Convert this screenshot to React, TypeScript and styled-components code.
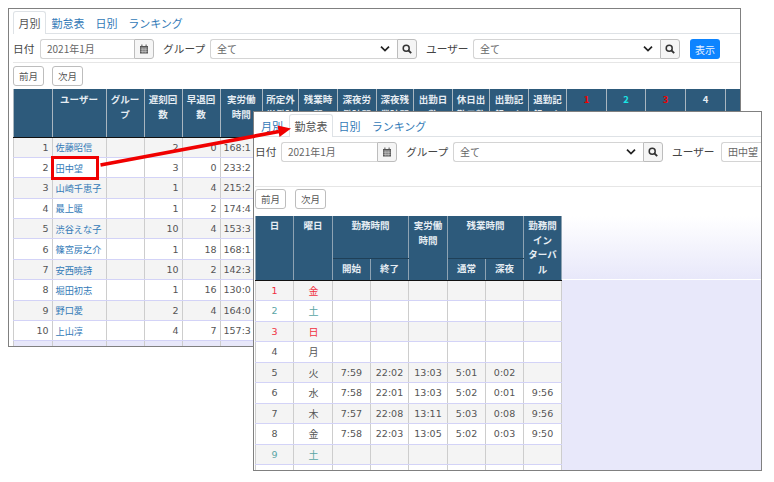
import React from "react";
import styled, { createGlobalStyle } from "styled-components";

const Global = createGlobalStyle`
  html, body { margin: 0; padding: 0; background: #fff; }
  body { font-family: "DejaVu Sans", "Noto Sans CJK JP", sans-serif; color: #333; }
`;

const Canvas = styled.div`
  position: relative;
  width: 774px;
  height: 482px;
  overflow: hidden;
  background: #fff;
`;

const Win = styled.section<{ $x: number; $y: number; $w: number; $h: number; $pad: number }>`
  position: absolute;
  left: ${(p) => p.$x}px;
  top: ${(p) => p.$y}px;
  width: ${(p) => p.$w}px;
  height: ${(p) => p.$h}px;
  box-sizing: border-box;
  border: 1px solid #808080;
  background: #fff;
  overflow: hidden;
  padding: 2px 0 0 ${(p) => p.$pad}px;
`;

const Tabs = styled.div`
  display: flex;
  height: 22px;
  box-shadow: 0 1px 0 #dee2e6;
  width: 900px;
  align-items: stretch;
`;

const Tab = styled.div<{ $active?: boolean; $w: number }>`
  width: ${(p) => p.$w}px;
  box-sizing: border-box;
  display: flex;
  align-items: center;
  justify-content: center;
  font: 11px "Noto Sans CJK JP", sans-serif;
  color: ${(p) => (p.$active ? "#555" : "#337ab7")};
  background: #fff;
  border: 1px solid ${(p) => (p.$active ? "#dee2e6" : "transparent")};
  border-bottom: 0;
  border-radius: 3px 3px 0 0;
  height: ${(p) => (p.$active ? "23px" : "22px")};
`;

const FormRow = styled.div`
  display: flex;
  align-items: center;
  height: 20px;
  margin-top: 6px;
  width: 900px;
`;

const Label = styled.span<{ $w: number; $gap: number }>`
  width: ${(p) => p.$w}px;
  margin-right: ${(p) => p.$gap}px;
  flex: none;
  font: 10.7px/20px "Noto Sans CJK JP", sans-serif;
  color: #444;
  white-space: nowrap;
`;

const Field = styled.div<{ $w: number }>`
  width: ${(p) => p.$w}px;
  height: 20px;
  flex: none;
  box-sizing: border-box;
  border: 1px solid #d4d4d4;
  border-radius: 3px 0 0 3px;
  border-right: 0;
  padding: 0 18px 0 6px;
  position: relative;
  font: 10px/18px "Noto Sans CJK JP", sans-serif;
  color: #666;
  background: #fff;
  display: flex;
  align-items: center;
`;

const Chevron = styled.svg`
  position: absolute;
  right: 7px;
  top: 5px;
  width: 10px;
  height: 8px;
`;

const AddOn = styled.div<{ $w: number; $after: number }>`
  width: ${(p) => p.$w}px;
  height: 20px;
  flex: none;
  box-sizing: border-box;
  border: 1px solid #bdbdbd;
  border-radius: 0 3px 3px 0;
  background: #f5f5f5;
  margin-right: ${(p) => p.$after}px;
  display: flex;
  align-items: center;
  justify-content: center;
  color: #444;
`;

const Primary = styled.button`
  width: 30px;
  height: 20px;
  flex: none;
  padding: 0;
  border: 0;
  border-radius: 3px;
  background: #0d84ff;
  color: #e8f2ff;
  font: 10px "Noto Sans CJK JP", sans-serif;
`;

const Rule = styled.div<{ $top: number }>`
  height: 1px;
  width: 900px;
  margin-top: ${(p) => p.$top}px;
  background: #e6e6e6;
`;

const NavRow = styled.div<{ $gap: number; $top: number }>`
  display: flex;
  gap: ${(p) => p.$gap}px;
  margin-top: ${(p) => p.$top}px;
`;

const NavBtn = styled.button`
  width: 31px;
  height: 20px;
  box-sizing: border-box;
  padding: 0;
  border: 1px solid #bdbdbd;
  border-radius: 3px;
  background: #fff;
  color: #555;
  font: 9.5px "Noto Sans CJK JP", sans-serif;
`;

const Grid = styled.table<{ $w: number }>`
  border-collapse: collapse;
  table-layout: fixed;
  width: ${(p) => p.$w}px;
  font: 9.5px "DejaVu Sans", "Noto Sans CJK JP", sans-serif;
`;

const TableArea = styled.div<{ $top: number; $w: number; $h: number }>`
  margin-top: ${(p) => p.$top}px;
  width: ${(p) => p.$w}px;
  height: ${(p) => p.$h}px;
  overflow: hidden;
`;

const LavenderArea = styled(TableArea)`
  background: linear-gradient(#fff 0, #e8e8fa 63px, #fff 63px, #fff 64px, #e8e8fa 64px, #e8e8fa 100%);
`;

const Head = styled.th<{ $h?: number; $tone?: string; $sub?: boolean }>`
  background: #2d5a7b;
  color: ${(p) => p.$tone ?? "#e6edf3"};
  font: bold 9.5px/14.6px "Noto Sans CJK JP", sans-serif;
  height: ${(p) => p.$h ?? 48}px;
  padding: 3px 3px 0;
  box-sizing: border-box;
  vertical-align: top;
  text-align: center;
  border-left: 1px solid #a9b6c0;
  border-right: 1px solid #a9b6c0;
  border-top: ${(p) => (p.$sub ? "1px solid #8ea3b3" : "0")};
  border-bottom: 1px solid #111;
`;

const DailyHead = styled(Head)`
  padding-top: 2px;
  border-left-color: #8ea3b3;
  border-right-color: #8ea3b3;
`;

const HeadGroup = styled(DailyHead)`
  border-bottom: 1px solid #1f4058;
`;

const Row = styled.tr<{ $odd: boolean; $h: number }>`
  height: ${(p) => p.$h}px;
  background: ${(p) => (p.$odd ? "#f4f4f4" : "#fff")};
`;

const Cell = styled.td<{ $align?: string; $tone?: string }>`
  box-sizing: border-box;
  padding: 0 3px;
  text-align: ${(p) => p.$align ?? "right"};
  color: ${(p) => p.$tone ?? "#555"};
  border-left: 1px solid #cdcdcd;
  border-right: 1px solid #cdcdcd;
  border-bottom: 1px solid #d3d3f7;
  white-space: nowrap;
  overflow: hidden;
`;

const DayName = styled(Cell)`
  padding: 0 3px 0 4px;
  font: 10px "Noto Sans CJK JP", sans-serif;
`;

const NameLink = styled.a`
  color: #337ab7;
  font: 9.2px "Noto Sans CJK JP", sans-serif;
  text-decoration: none;
`;

const Tail = styled.tr`
  height: 8px;
  background: #e8e8fa;
  td { border-left: 1px solid #cdcdcd; padding: 0; }
`;

const Callout = styled.div`
  position: absolute;
  left: 51px;
  top: 156px;
  width: 48px;
  height: 24px;
  box-sizing: border-box;
  border: 3px solid #f00000;
`;

const Arrow = styled.svg`
  position: absolute;
  left: 0;
  top: 0;
  width: 774px;
  height: 482px;
  pointer-events: none;
`;

const Calendar = () => (
  <svg width="10" height="10" viewBox="0 0 10 10">
    <path fill="#555" d="M1 2h8v7.5H1zM2.4.6h1v2h-1zM6.6.6h1v2h-1z" />
    <path stroke="#eee" strokeWidth=".5" d="M1.5 4h7M1.5 5.7h7M1.5 7.4h7M3.2 3.6v5.6M5 3.6v5.6M6.8 3.6v5.6" />
  </svg>
);

const Search = () => (
  <svg width="10" height="10" viewBox="0 0 10 10" fill="none" stroke="#333" strokeWidth="1.5">
    <circle cx="4.2" cy="4.2" r="3" />
    <path d="M6.5 6.5 9.2 9.2" strokeWidth="1.8" />
  </svg>
);

const Down = () => (
  <Chevron viewBox="0 0 10 8" fill="none" stroke="#222" strokeWidth="1.7">
    <path d="M1 1.6 5 5.6 9 1.6" />
  </Chevron>
);

const monthlyCols = [38.5, 54, 38, 38, 38, 42.5, 36, 39, 38.5, 37.5, 39, 37, 39, 38, 40, 39, 40, 40, 15];
const monthlyHead: [string, string?][] = [
  [""], ["ユーザー"], ["グループ"], ["遅刻回数"], ["早退回数"], ["実労働時間"], ["所定外労働時間"], ["残業時間"],
  ["深夜労働時間"], ["深夜残業時間"], ["出勤日数"], ["休日出勤日数"], ["出勤記録のない"], ["退勤記録のない"],
  ["1", "#f00000"], ["2", "#19e6e6"], ["3", "#f00000"], ["4"], [""],
];
const staff: [string, string, string, string][] = [
  ["佐藤昭信", "2", "0", "168:1"], ["田中望", "3", "0", "233:2"], ["山崎千恵子", "1", "4", "215:2"],
  ["最上暖", "1", "2", "174:4"], ["渋谷えな子", "10", "4", "153:3"], ["篠宮房之介", "1", "18", "168:1"],
  ["安西暁詩", "10", "2", "142:3"], ["堀田初志", "1", "16", "130:0"], ["野口愛", "2", "4", "164:0"], ["上山淳", "4", "7", "157:3"],
];

const dailyCols = [38, 39, 38, 38, 39, 38, 38, 38];
const days: string[][] = [
  ["1", "金"], ["2", "土"], ["3", "日"], ["4", "月"],
  ["5", "火", "7:59", "22:02", "13:03", "5:01", "0:02", ""],
  ["6", "水", "7:58", "22:01", "13:03", "5:02", "0:01", "9:56"],
  ["7", "木", "7:57", "22:08", "13:11", "5:03", "0:08", "9:56"],
  ["8", "金", "7:58", "22:03", "13:05", "5:02", "0:03", "9:50"],
  ["9", "土"], ["", ""],
];
const dayTone = (n: number) => (n === 1 || n === 3 ? "#f03040" : n === 2 || n === 9 ? "#5aa5a5" : "#555");

const Colgroup = ({ cols }: { cols: number[] }) => (
  <colgroup>
    {cols.map((w, i) => (
      <col key={i} style={{ width: w }} />
    ))}
  </colgroup>
);

export default function App() {
  return (
    <Canvas>
      <Global />
      <Win $x={8} $y={8} $w={733} $h={339} $pad={4}>
        <Tabs>
          <Tab $active $w={33}>月別</Tab>
          <Tab $w={44}>勤怠表</Tab>
          <Tab $w={33}>日別</Tab>
          <Tab $w={65}>ランキング</Tab>
        </Tabs>
        <FormRow>
          <Label $w={22} $gap={5}>日付</Label>
          <Field $w={94}>2021年1月</Field>
          <AddOn $w={20} $after={9}><Calendar /></AddOn>
          <Label $w={42} $gap={5}>グループ</Label>
          <Field $w={187}>全て<Down /></Field>
          <AddOn $w={20} $after={9}><Search /></AddOn>
          <Label $w={42} $gap={5}>ユーザー</Label>
          <Field $w={187}>全て<Down /></Field>
          <AddOn $w={20} $after={10}><Search /></AddOn>
          <Primary>表示</Primary>
        </FormRow>
        <Rule $top={3} />
        <NavRow $gap={8} $top={3}>
          <NavBtn>前月</NavBtn>
          <NavBtn>次月</NavBtn>
        </NavRow>
        <TableArea $top={3} $w={727} $h={258}>
          <Grid $w={727}>
            <Colgroup cols={monthlyCols} />
            <thead>
              <tr>
                {monthlyHead.map(([t, tone], i) => (
                  <Head key={i} $tone={tone}>{t}</Head>
                ))}
              </tr>
            </thead>
            <tbody>
              {staff.map(([name, late, early, hours], i) => (
                <Row key={name} $odd={i % 2 === 0} $h={20.4}>
                  <Cell>{i + 1}</Cell>
                  <Cell $align="left"><NameLink>{name}</NameLink></Cell>
                  <Cell />
                  <Cell>{late}</Cell>
                  <Cell>{early}</Cell>
                  <Cell $align="left">{hours}</Cell>
                  {monthlyCols.slice(6).map((_, j) => (
                    <Cell key={j} />
                  ))}
                </Row>
              ))}
              <Tail><td /><td /><td /><td /><td /><td /></Tail>
            </tbody>
          </Grid>
        </TableArea>
      </Win>

      <Win $x={253} $y={111} $w={509} $h={360} $pad={1}>
        <Tabs>
          <Tab $w={34}>月別</Tab>
          <Tab $active $w={44}>勤怠表</Tab>
          <Tab $w={33}>日別</Tab>
          <Tab $w={66}>ランキング</Tab>
        </Tabs>
        <FormRow>
          <Label $w={22} $gap={4}>日付</Label>
          <Field $w={96}>2021年1月</Field>
          <AddOn $w={20} $after={9}><Calendar /></AddOn>
          <Label $w={42} $gap={5}>グループ</Label>
          <Field $w={190}>全て<Down /></Field>
          <AddOn $w={20} $after={9}><Search /></AddOn>
          <Label $w={42} $gap={7}>ユーザー</Label>
          <Field $w={60}>田中望</Field>
        </FormRow>
        <Rule $top={24} />
        <NavRow $gap={9} $top={2}>
          <NavBtn>前月</NavBtn>
          <NavBtn>次月</NavBtn>
        </NavRow>
        <LavenderArea $top={7} $w={507} $h={260}>
          <Grid $w={306}>
            <Colgroup cols={dailyCols} />
            <thead>
              <tr>
                <DailyHead rowSpan={2} $h={64}>日</DailyHead>
                <DailyHead rowSpan={2} $h={64}>曜日</DailyHead>
                <HeadGroup colSpan={2} $h={42}>勤務時間</HeadGroup>
                <DailyHead rowSpan={2} $h={64}>実労働時間</DailyHead>
                <HeadGroup colSpan={2} $h={42}>残業時間</HeadGroup>
                <DailyHead rowSpan={2} $h={64}>勤務間<br />イン<br />ターバ<br />ル</DailyHead>
              </tr>
              <tr>
                <DailyHead $sub $h={22}>開始</DailyHead>
                <DailyHead $sub $h={22}>終了</DailyHead>
                <DailyHead $sub $h={22}>通常</DailyHead>
                <DailyHead $sub $h={22}>深夜</DailyHead>
              </tr>
            </thead>
            <tbody>
              {days.map((d, i) => (
                <Row key={i} $odd={i % 2 === 0} $h={20.5}>
                  <Cell $align="center" $tone={dayTone(i + 1)}>{d[0]}</Cell>
                  <DayName $align="center" $tone={dayTone(i + 1)}>{d[1]}</DayName>
                  {[2, 3, 4, 5, 6, 7].map((k) => (
                    <Cell key={k} $align="center">{d[k] ?? ""}</Cell>
                  ))}
                </Row>
              ))}
            </tbody>
          </Grid>
        </LavenderArea>
      </Win>

      <Callout />
      <Arrow viewBox="0 0 774 482">
        <path d="M100.5 165 279 131.5" stroke="#f00000" strokeWidth="3.6" fill="none" />
        <path d="M277.5 125.5 291 128.5 279.5 137Z" fill="#f00000" />
      </Arrow>
    </Canvas>
  );
}
